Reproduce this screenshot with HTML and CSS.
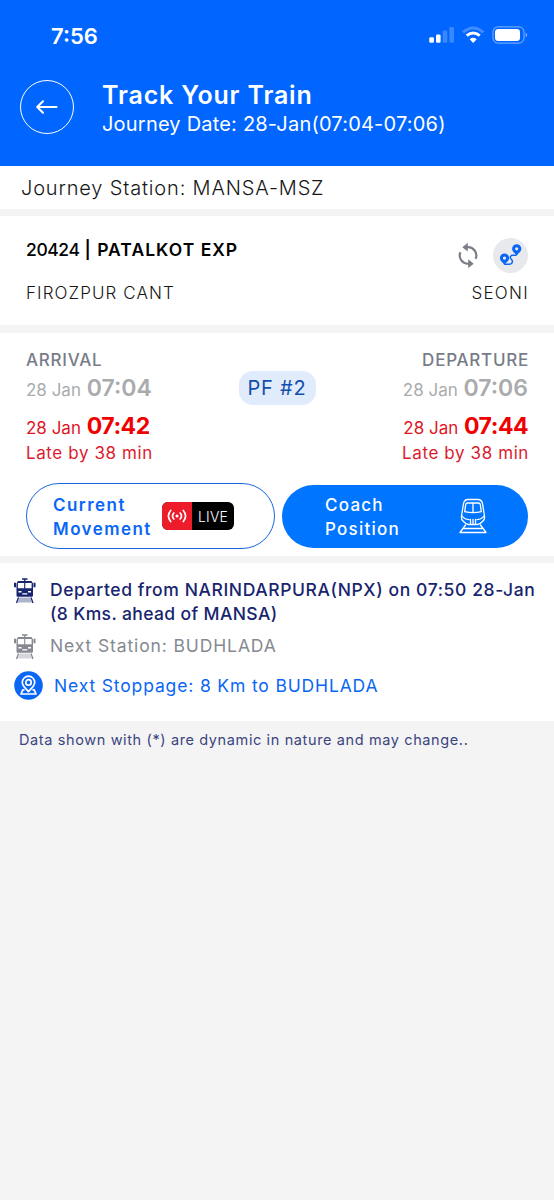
FILE: index.html
```
<!DOCTYPE html>
<html lang="en">
<head>
<meta charset="utf-8">
<title>Track Your Train</title>
<link rel="stylesheet" href="styles.css">
</head>
<body>
<svg width="0" height="0" class="defs">
  <symbol id="front-train" viewBox="0 0 22 26">
    <path d="M8 1h5.500M10.750 1v3" fill="none" stroke="currentColor" stroke-width="1.300"/>
    <path fill="currentColor" fill-rule="evenodd" d="M4 3h13.500l1.500 2.500v12q0 1.200-1.200 1.200H3.700q-1.200 0-1.200-1.200v-12zM3.900 5v5.200h6.300V5zM11.300 5v5.200h6.300V5zM4.500 13v1.500h3V13zM14 13v1.500h3V13zM8.300 15.200v1.200h5v-1.200z"/>
    <path fill="currentColor" d="M0 4.800h2v4.400H0zM19.500 4.800h2v4.400h-2z"/>
    <path fill="currentColor" opacity=".35" d="M5.500 19.500h10.500l2 5H3.500z"/>
    <path d="M4.500 19.500 2.500 25M17 19.500l2 5.500" fill="none" stroke="currentColor" stroke-width="1.300"/>
  </symbol>
</svg>
<header class="header">
  <div class="status">
    <span class="clock">7:56</span>
    <svg class="status-icons" width="100" height="20" viewBox="0 0 100 20" fill="#fff">
      <rect x="0.300" y="11.300" width="4.600" height="5.500" rx="1.300"/>
      <rect x="7" y="8.500" width="4.600" height="8.300" rx="1.300"/>
      <g opacity=".22"><rect x="13.700" y="4.500" width="4.600" height="12.300" rx="1.300"/><rect x="20.400" y="1" width="4.600" height="15.800" rx="1.300"/></g>
      <g fill="none" stroke="#fff" stroke-width="3">
        <path d="M34 6.300Q44.200-2.400 54.400 6.300" opacity=".25"/>
        <path d="M37.700 9.700Q44.200 4.200 50.700 9.700"/>
      </g>
      <path d="M40.700 13.200Q44.200 10.500 47.700 13.200L44.200 17z"/>
      <rect x="64" y=".900" width="31" height="16.200" rx="5" fill="none" stroke="#fff" stroke-opacity=".42" stroke-width="1.200"/>
      <rect x="66" y="3" width="25" height="12" rx="3.300"/>
      <path d="M96.700 6.500q3 2.500 0 5z" opacity=".5"/>
    </svg>
  </div>
  <div class="titlebar">
    <button class="back" aria-label="Back">
      <svg width="22" height="14" viewBox="0 0 22 14" fill="none" stroke="#fff" stroke-width="2" stroke-linecap="round" stroke-linejoin="round"><path d="M20.500 7H1.500M7 1.200 1.200 7 7 12.800"/></svg>
    </button>
    <div>
      <h1 class="title">Track Your Train</h1>
      <p class="subtitle">Journey Date: 28-Jan(07:04-07:06)</p>
    </div>
  </div>
</header>
<main>
  <section class="station">Journey Station: MANSA-MSZ</section>

  <section class="train">
    <div class="train-row">
      <p class="train-name"><span class="number">20424</span> <span class="name">| PATALKOT EXP</span></p>
      <div class="actions">
        <svg width="22" height="26" viewBox="0 0 22 26" fill="none" stroke="#7a7f87" stroke-width="2.200">
          <path d="M10 5.200A8.300 8.300 0 0 1 18.600 16.800M12 21.700A8.300 8.300 0 0 1 3.400 10.200"/>
          <path d="M10.800.800v8.800L5.300 5.200zM11.200 17.300v8.800l5.500-4.400z" fill="#7a7f87" stroke="none"/>
        </svg>
        <span class="route">
          <svg width="24" height="24" viewBox="0 0 24 24">
            <path d="M5.500 21.300h4.500c4 0 4-3.500 2.300-5s-1.300-4 1.700-4h3.500" fill="none" stroke="#0a66f5" stroke-width="1.500"/>
            <path fill="#0a66f5" fill-rule="evenodd" d="M5.500 10.500a4.600 4.600 0 0 1 4.600 4.600c0 3-2.700 4.300-4.600 6.800-1.900-2.500-4.600-3.800-4.600-6.800a4.600 4.600 0 0 1 4.600-4.600zm0 3a1.600 1.600 0 1 0 0 3.200 1.600 1.600 0 0 0 0-3.200zM17.700 1.200a4.600 4.600 0 0 1 4.600 4.600c0 3-2.700 4.300-4.600 6.800-1.900-2.500-4.600-3.800-4.600-6.800a4.600 4.600 0 0 1 4.600-4.600zm0 3a1.600 1.600 0 1 0 0 3.200 1.600 1.600 0 0 0 0-3.200z"/>
          </svg>
        </span>
      </div>
    </div>
    <div class="ends"><span>FIROZPUR CANT</span><span class="seoni">SEONI</span></div>
  </section>

  <section class="timing">
    <div class="times">
      <div class="col">
        <p class="label">ARRIVAL</p>
        <p class="sched"><span>28 Jan</span> <b>07:04</b></p>
        <p class="actual"><span>28 Jan</span> <b>07:42</b></p>
        <p class="late">Late by 38 min</p>
      </div>
      <span class="platform">PF #2</span>
      <div class="col right">
        <p class="label">DEPARTURE</p>
        <p class="sched"><span>28 Jan</span> <b>07:06</b></p>
        <p class="actual"><span>28 Jan</span> <b>07:44</b></p>
        <p class="late">Late by 38 min</p>
      </div>
    </div>
    <div class="buttons">
      <button class="btn outline">
        <span class="movement">Current<br>Movement</span>
        <span class="badge">
          <span class="signal"><svg width="20" height="14" viewBox="0 0 20 14" fill="none" stroke="#fff" stroke-width="1.700" stroke-linecap="round"><circle cx="10" cy="7" r="1.500" fill="#fff" stroke="none"/><path d="M6.800 4Q4.200 7 6.800 10M13.200 4Q15.800 7 13.200 10M3.700 1.500Q-.900 7 3.700 12.500M16.300 1.500Q20.900 7 16.300 12.500"/></svg></span>
          <span class="live">LIVE</span>
        </span>
      </button>
      <button class="btn solid">
        <span class="coach">Coach<br>Position</span>
        <svg width="28" height="36" viewBox="0 0 28 36" fill="none" stroke="#fff" stroke-width="1.300" stroke-linejoin="round" stroke-linecap="round">
          <path d="M9 1.500h10q3.500 0 4.500 4l2 12.500q.5 3-1.500 5-2.500 3-5.500 3.500h-9Q6.500 26 4 23q-2-2-1.500-5l2-12.500q1-4 4.500-4z"/>
          <path d="M8.500 5h11q1.500 0 1.800 1.500l1 7.200q-8.300 2-16.600 0l1-7.200Q7 5 8.500 5zM14 5v9.500M3 18q2 3.200 7 3.700M25 18q-2 3.200-7 3.700M11.500 21.500v4M14 21.500v4M16.500 21.500v4M6.500 27l-5.500 7.500h26L21.500 27M4.500 30.500h19"/>
        </svg>
      </button>
    </div>
  </section>

  <section class="progress">
    <div class="step departed">
      <svg class="train-icon" width="22" height="26"><use href="#front-train"/></svg>
      <p><span class="line1">Departed from NARINDARPURA(NPX) on 07:50 28-Jan</span><br><span class="line2">(8 Kms. ahead of MANSA)</span></p>
    </div>
    <div class="step next">
      <svg class="train-icon" width="22" height="26"><use href="#front-train"/></svg>
      <p>Next Station: BUDHLADA</p>
    </div>
    <div class="step stoppage">
      <svg width="29" height="29" viewBox="0 0 29 29">
        <circle cx="14.500" cy="14.500" r="14.300" fill="#0a66f5"/>
        <g fill="none" stroke="#fff" stroke-width="1.700" stroke-linejoin="round">
          <path d="M14.500 20.700c-2.500-3.200-6.200-5.800-6.200-9.300a6.200 6.200 0 0 1 12.400 0c0 3.500-3.700 6.100-6.200 9.300z"/>
          <circle cx="14.500" cy="11.400" r="2.700"/>
          <path d="M10.500 18.800H8.800L7 23h15l-1.800-4.200h-1.700"/>
        </g>
      </svg>
      <p>Next Stoppage: 8 Km to BUDHLADA</p>
    </div>
  </section>
  <p class="note">Data shown with (*) are dynamic in nature and may change..</p>
</main>
</body>
</html>
```
FILE: styles.css
```
* { box-sizing: border-box; }
body {
  margin: 0;
  background: #f4f4f4;
  font-family: Inter, "Open Sans", sans-serif;
  font-size: 17px;
  color: #161616;
  white-space: nowrap;
}
p, h1 { margin: 0; }
svg { display: block; flex: none; }
.defs { position: absolute; }
button { font: inherit; cursor: pointer; }

.header { height: 166px; background: #0066ff; color: #fff; }
.status {
  height: 71px;
  display: flex;
  align-items: center;
  justify-content: space-between;
  padding: 0 25px 0 51px;
}
.clock { font-size: 22px; font-weight: 600; }
.titlebar { display: flex; gap: 28px; padding: 9px 20px 0; }
.back {
  width: 54px;
  height: 54px;
  display: grid;
  place-items: center;
  background: none;
  border: 1.5px solid #fff;
  border-radius: 50%;
  padding: 0;
}
.title { font-size: 25px; line-height: 30px; font-weight: 600; letter-spacing: .83px; }
.subtitle { font-size: 20px; line-height: 28px; letter-spacing: .2px; }

.station {
  height: 43px;
  line-height: 45px;
  background: #fff;
  padding-left: 21px;
  font-size: 20px;
  font-weight: 300;
  letter-spacing: .84px;
}

.train { height: 109px; margin-top: 7px; background: #fff; padding: 21px 26px 0; }
.train-row { display: flex; justify-content: space-between; height: 44px; }
.train-name { font-size: 17.5px; line-height: 26px; color: #000; }
.number { font-weight: 500; letter-spacing: -.4px; }
.name { font-weight: 600; letter-spacing: 1.02px; }
.actions { display: flex; align-items: center; gap: 14px; height: 36px; }
.route {
  width: 35px;
  height: 35px;
  display: grid;
  place-items: center;
  border-radius: 50%;
  background: #e8e9ec;
}
.ends { display: flex; justify-content: space-between; line-height: 24px; font-weight: 300; letter-spacing: 1.1px; }
.seoni { letter-spacing: 1.3px; margin-right: -1px; }

.timing { height: 223px; margin-top: 8px; background: #fff; padding: 15px 26px 0; }
.times { display: flex; justify-content: space-between; height: 135px; }
.col { width: 140px; }
.right { text-align: right; }
.label { line-height: 24px; font-weight: 500; color: #777c88; letter-spacing: .75px; }
.right .label, .right .late { margin-right: -1px; }
.sched { line-height: 32px; color: #a9abad; font-weight: 400; }
.sched b, .actual b { font-size: 23px; font-weight: 600; margin-left: 1px; }
.actual { line-height: 32px; margin-top: 4px; margin-bottom: -3px; color: #e01624; }
.actual b { color: #f00000; letter-spacing: -.5px; font-weight: 700; }
.late { line-height: 24px; color: #dc1c2e; letter-spacing: .6px; }
.platform {
  width: 77px;
  height: 34px;
  line-height: 35px;
  margin-top: 23px;
  border-radius: 14px;
  background: #e0ebfb;
  color: #114fad;
  font-size: 20px;
  letter-spacing: .8px;
  text-align: center;
}
.buttons { display: flex; align-items: center; gap: 7px; height: 66px; }
.btn { flex: none; display: flex; align-items: center; border-radius: 33px; text-align: left; line-height: 24px; }
.outline { width: 249px; height: 66px; border: 1.5px solid #1766e0; background: #fff; color: #0a66f5; padding: 0 0 0 26px; gap: 10px; }
.movement { width: 99px; font-weight: 600; letter-spacing: 1.45px; padding-top: 1px; }
.badge { display: flex; width: 72px; height: 28px; border-radius: 6px; overflow: hidden; background: #000; }
.signal { width: 30px; display: grid; place-items: center; background: #ec1c2b; }
.live { width: 42px; line-height: 29px; text-align: center; color: #fff; font-size: 14px; font-weight: 300; letter-spacing: .2px; }
.solid { width: 246px; height: 63px; border: 0; background: #0075ff; color: #fff; padding: 0 41px 0 43px; justify-content: space-between; }
.coach { font-weight: 500; letter-spacing: 1.25px; padding-top: 1px; }

.progress { height: 158px; margin-top: 7px; background: #fff; padding: 15px 14px 0; font-size: 17.5px; line-height: 24px; }
.step { display: flex; align-items: flex-start; gap: 14px; }
.departed { color: #17246e; font-weight: 500; height: 56px; }
.line1 { letter-spacing: .6px; }
.line2 { letter-spacing: .38px; }
.next { color: #868991; height: 44px; letter-spacing: .88px; }
.stoppage { color: #0a66f5; gap: 11px; letter-spacing: .85px; }
.stoppage svg { margin-top: -7px; }
.stoppage p { margin-top: -4px; }
.note { padding-left: 19px; line-height: 37px; font-size: 14.5px; color: #3b4580; letter-spacing: .62px; }
```
